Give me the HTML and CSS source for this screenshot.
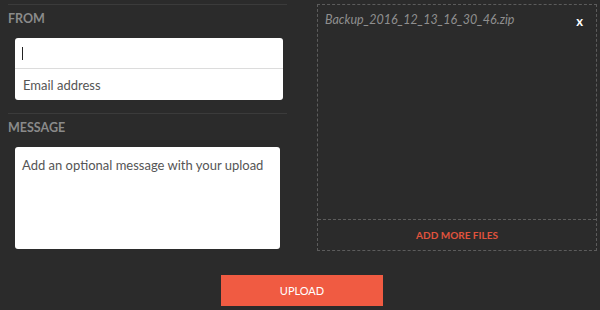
FILE: index.html
```html
<!DOCTYPE html>
<html lang="en">
<head>
    <meta charset="UTF-8">
    <title>Upload</title>
    <link rel="stylesheet" href="styles.css">
</head>
<body>
    <div class="uploader">
        <div class="form-col">
            <div class="field">
                <div class="field-label">FROM</div>
                <div class="email-box">
                    <div class="email-input"><span class="caret"></span></div>
                    <div class="email-hint">Email address</div>
                </div>
            </div>
            <div class="field">
                <div class="field-label">MESSAGE</div>
                <div class="message-box">Add an optional message with your upload</div>
            </div>
        </div>
        <div class="drop-col">
            <div class="file-list">
                <div class="file-row">
                    <span class="file-name">Backup_2016_12_13_16_30_46.zip</span>
                    <span class="file-remove">x</span>
                </div>
            </div>
            <div class="add-more">ADD MORE FILES</div>
        </div>
    </div>
    <div class="actions">
        <button class="upload-btn">UPLOAD</button>
    </div>
</body>
</html>
```

FILE: styles.css
```css
body {
    margin: 0;
    background: #2b2b2b;
    font-family: 'Lato', sans-serif;
    color: #555;
}
.uploader {
    display: flex;
    align-items: flex-start;
    gap: 30px;
    padding: 4px 3px 0 8px;
}
.form-col {
    width: 279px;
}
.field {
    border-top: 1px solid #3b3b3b;
    padding-top: 6px;
    padding-bottom: 13px;
}
.field:last-child {
    padding-bottom: 0;
}
.field-label {
    font-size: 12.5px;
    font-weight: bold;
    line-height: 16px;
    color: #8a8a8a;
    margin-bottom: 11px;
}
.email-box {
    margin-left: 7px;
    width: 268px;
    height: 62px;
    background: #fff;
    border-radius: 3px;
    display: flex;
    flex-direction: column;
}
.email-input {
    height: 30px;
    border-bottom: 1px solid #dcdcdc;
    display: flex;
    align-items: center;
    padding-left: 7px;
}
.caret {
    width: 1px;
    height: 13px;
    background: #222;
}
.email-hint {
    flex: 1;
    display: flex;
    align-items: center;
    padding-left: 8px;
    font-size: 13px;
    color: #555;
}
.message-box {
    margin-left: 7px;
    width: 258px;
    height: 92px;
    padding: 10px 0 0 7px;
    background: #fff;
    border-radius: 3px;
    font-size: 13px;
    color: #555;
}
.drop-col {
    width: 278px;
    height: 245px;
    border: 1px dashed #5c5c5c;
    display: flex;
    flex-direction: column;
}
.file-list {
    flex: 1;
}
.file-row {
    display: flex;
    justify-content: space-between;
    align-items: center;
    padding: 5px 13px 0 7px;
}
.file-name {
    font-style: italic;
    font-size: 12.5px;
    color: #8f8f8f;
}
.file-remove {
    font-size: 13px;
    font-weight: bold;
    color: #fff;
    margin-top: 3px;
}
.add-more {
    height: 30px;
    border-top: 1px dashed #5c5c5c;
    display: flex;
    align-items: center;
    justify-content: center;
    font-size: 10px;
    font-weight: bold;
    color: #e0533d;
}
.actions {
    display: flex;
    justify-content: center;
    padding-left: 4px;
    margin-top: 24px;
}
.upload-btn {
    width: 162px;
    height: 31px;
    border: none;
    background: #f05b42;
    color: #fff;
    font-family: inherit;
    font-size: 11px;
    cursor: pointer;
}
```
